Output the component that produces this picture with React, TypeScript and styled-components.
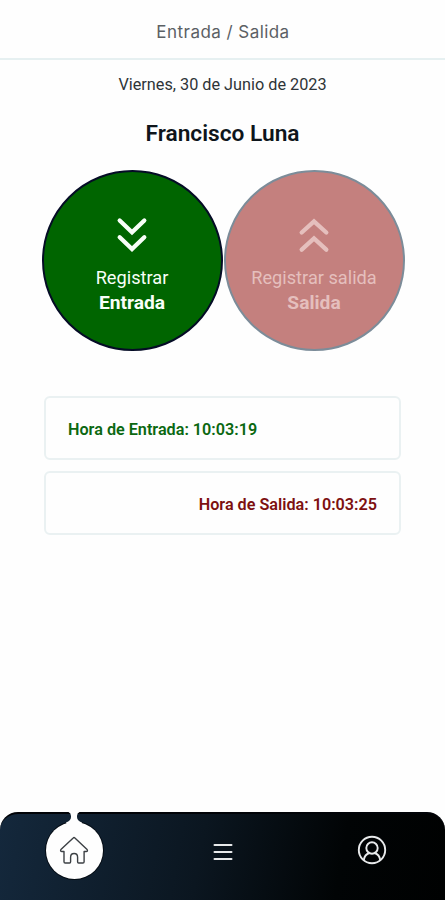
import React from "react";
import styled, { createGlobalStyle } from "styled-components";

const GlobalStyle = createGlobalStyle`
  * { box-sizing: border-box; }
  body { margin: 0; background: #fefefe; }
`;

const Screen = styled.div`
  display: flex;
  flex-direction: column;
  width: 445px;
  height: 900px;
  overflow: hidden;
  background: #fefefe;
  font-family: Roboto, "Liberation Sans", sans-serif;
  color: #0e151b;
`;

const Header = styled.header`
  flex: none;
  height: 60px;
  padding: 21px 0 0 1px;
  border-bottom: 2px solid #e6f0f1;
  text-align: center;
`;

const Title = styled.h1`
  margin: 0;
  font: 400 17px/22px Inter, sans-serif;
  letter-spacing: 0.45px;
  color: #5b6064;
`;

const Content = styled.main`
  flex: 1;
  display: flex;
  flex-direction: column;
  align-items: center;
`;

const DateText = styled.p`
  margin: 14px 0 0;
  font-size: 16.25px;
  line-height: 21px;
  color: #2e3438;
`;

const Name = styled.h2`
  margin: 25px 0 0;
  font-size: 22.7px;
  font-weight: 600;
  line-height: 28px;
`;

const Actions = styled.div`
  display: flex;
  gap: 1px;
  margin-top: 22px;
  padding-left: 1px;
`;

const PunchButton = styled.button<{ $tone: "in" | "out" }>`
  display: flex;
  flex-direction: column;
  align-items: center;
  width: 181px;
  height: 181px;
  padding: 44px 0 0;
  border: 2px solid ${(p) => (p.$tone === "in" ? "#050c26" : "#7c8c99")};
  border-radius: 50%;
  background: ${(p) => (p.$tone === "in" ? "#006500" : "#c4807e")};
  color: ${(p) => (p.$tone === "in" ? "#f8fff8" : "#e5bfbd")};
  font: 400 18.2px/25px Roboto, sans-serif;
  white-space: nowrap;
`;

const Chevrons = styled.svg`
  display: block;
  width: 34px;
  height: 38px;
  margin-bottom: 11px;
`;

const ActionTarget = styled.strong`
  font-size: 19.2px;
  font-weight: 700;
`;

const Records = styled.section`
  display: flex;
  flex-direction: column;
  gap: 11px;
  width: 357px;
  margin-top: 45px;
`;

const Record = styled.div<{ $tone: "in" | "out" }>`
  display: flex;
  align-items: center;
  justify-content: ${(p) => (p.$tone === "in" ? "flex-start" : "flex-end")};
  height: 64px;
  padding: 3px 22px 0;
  border: 2px solid #eaf1f2;
  border-radius: 6px;
  font-size: 16.2px;
  font-weight: 600;
  color: ${(p) => (p.$tone === "in" ? "#0b6811" : "#7d1010")};
`;

const NavBar = styled.nav`
  flex: none;
  display: grid;
  grid-template-columns: repeat(3, 1fr);
  justify-items: center;
  height: 88px;
  border-top: 2px solid #010307;
  border-radius: 18px 18px 0 0;
  background: linear-gradient(100deg, #14283c 0%, #0b1620 45%, #010405 76%, #000101 100%);
`;

const NavItem = styled.a`
  position: relative;
  display: flex;
  align-items: center;
  justify-content: center;
  width: 57px;
  height: 57px;
  margin-top: 7px;
  padding-left: 2px;
  color: #e8eaeb;
`;

const ActiveItem = styled(NavItem)`
  margin-top: 8px;
  border-radius: 50%;
  padding: 0 0 2px;
  background: #fefefe;
  box-shadow: 0 0 0 1px #040b13;
  color: #3c4044;
`;

const Neck = styled.svg`
  position: absolute;
  top: -10px;
  left: 17.5px;
  width: 22px;
  height: 15px;
`;

const NavIcon = styled.svg`
  position: relative;
  display: block;
  width: 32px;
  height: 32px;
`;

function DoubleChevron({ up }: { up?: boolean }) {
  return (
    <Chevrons viewBox="0 0 34 38" fill="none" stroke="currentColor" strokeWidth="4.3" strokeLinecap="round" strokeLinejoin="miter">
      {up ? (
        <path d="M4.7 16.5 17 5.300l12.300 11.200M4.700 33.700 17 22.500l12.300 11.200" />
      ) : (
        <path d="M4.700 4.500 17 16.200 29.300 4.500M4.700 21.300 17 33l12.300-11.700" />
      )}
    </Chevrons>
  );
}

function HomeIcon() {
  return (
    <NavIcon viewBox="0 0 32 32" fill="none" stroke="currentColor" strokeWidth="1.4" strokeLinejoin="round">
      <path d="M15.200 3.900 2.900 15.500q-1 2 1.100 2H6v10.300q0 1.200 1.200 1.200h4.400q1 0 1-1.200v-4.500c0-5 7-5 7 0v4.500q0 1.200 1 1.200h4.300q1.200 0 1.200-1.200V17.500h2q2.100 0 1-2L16.900 3.900q-.9-.8-1.700 0Z" />
    </NavIcon>
  );
}

function MenuIcon() {
  return (
    <NavIcon viewBox="0 0 32 32" fill="none" stroke="currentColor" strokeWidth="2" strokeLinecap="round">
      <path d="M7.500 11h17M7.500 18h17M7.500 25h17" />
    </NavIcon>
  );
}

function ProfileIcon() {
  return (
    <NavIcon viewBox="0 0 32 32" fill="none" stroke="currentColor" strokeWidth="1.900">
      <circle cx="16" cy="16" r="13.200" />
      <circle cx="16" cy="14" r="5.700" />
      <path d="M7.800 26c.6-4 3-6.200 5.400-7M24.200 26c-.6-4-3-6.200-5.400-7" />
    </NavIcon>
  );
}

export default function App() {
  return (
    <Screen>
      <GlobalStyle />
      <Header>
        <Title>Entrada / Salida</Title>
      </Header>
      <Content>
        <DateText>Viernes, 30 de Junio de 2023</DateText>
        <Name>Francisco Luna</Name>
        <Actions>
          <PunchButton $tone="in">
            <DoubleChevron />
            <span>Registrar</span>
            <ActionTarget>Entrada</ActionTarget>
          </PunchButton>
          <PunchButton $tone="out" disabled>
            <DoubleChevron up />
            <span>Registrar salida</span>
            <ActionTarget>Salida</ActionTarget>
          </PunchButton>
        </Actions>
        <Records>
          <Record $tone="in">Hora de Entrada: 10:03:19</Record>
          <Record $tone="out">Hora de Salida: 10:03:25</Record>
        </Records>
      </Content>
      <NavBar>
        <ActiveItem aria-label="Inicio">
          <Neck viewBox="0 0 22 15">
            <path d="M5.500 0h11Q14 1 14 4v1q0 3.500 5 5.500l-2 4.500H5l-2-4.500q5-2 5-5.500V4Q8 1 5.500 0Z" fill="#fefefe" />
          </Neck>
          <HomeIcon />
        </ActiveItem>
        <NavItem aria-label="Menú">
          <MenuIcon />
        </NavItem>
        <NavItem aria-label="Perfil">
          <ProfileIcon />
        </NavItem>
      </NavBar>
    </Screen>
  );
}
